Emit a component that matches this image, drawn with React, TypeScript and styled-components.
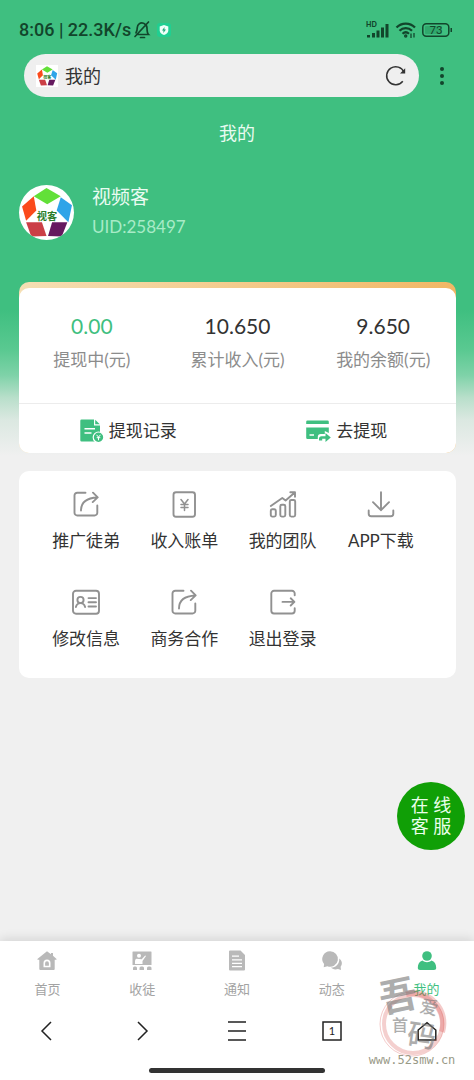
import React from "react";
import styled, { createGlobalStyle } from "styled-components";

const GREEN = "#3fbf80";
const INK = "#333333";

const GlobalStyle = createGlobalStyle`
  * { box-sizing: border-box; }
  html, body { margin: 0; padding: 0; background: #f0f0f0; }
  body { font-family: Lato, "Noto Sans CJK SC", sans-serif; color: ${INK}; }
  button, input { font: inherit; color: inherit; }
  button { border: 0; padding: 0; background: none; cursor: pointer; }
  a { color: inherit; text-decoration: none; }
  svg { display: block; flex: none; }
  h1, h2, p, dl, dt, dd, ul { margin: 0; padding: 0; font-weight: 400; }
`;

const Page = styled.div`
  min-height: 100vh;
  display: flex;
  flex-direction: column;
  background: linear-gradient(
    180deg,
    ${GREEN} 0,
    ${GREEN} 310px,
    #5ac991 350px,
    #7ed2a8 375px,
    #b9dfcb 398px,
    #dbe8e1 420px,
    #f0f0f0 456px
  );
`;

const StatusBar = styled.div`
  height: 54px;
  padding: 6px 21px 0 19px;
  display: flex;
  align-items: center;
  justify-content: space-between;
  color: #12452b;
  font-size: 18px;
  line-height: 24px;
`;

const StatusGroup = styled.div<{ $gap: number }>`
  display: flex;
  align-items: center;
  gap: ${(p) => p.$gap}px;
`;

const StatusText = styled.span`
  font-family: Roboto, sans-serif;
  font-weight: 500;
`;

const AddressRow = styled.div`
  display: flex;
  align-items: center;
  padding: 0 15px 0 24px;
  gap: 6px;
`;

const AddressBar = styled.div`
  flex: 1;
  min-width: 0;
  height: 43px;
  padding: 0 12px;
  display: flex;
  align-items: center;
  gap: 7px;
  border-radius: 22px;
  background: #efefef;
`;

const Favicon = styled.span`
  display: flex;
  background: #fff;
`;

const AddressInput = styled.input`
  flex: 1;
  min-width: 0;
  padding: 0;
  border: 0;
  outline: 0;
  background: transparent;
  font-size: 18px;
  line-height: 28px;
`;

const IconButton = styled.button<{ $w: number }>`
  width: ${(p) => p.$w}px;
  height: 34px;
  display: flex;
  align-items: center;
  justify-content: center;
`;

const Title = styled.h1`
  padding-top: 22px;
  font-size: 18px;
  line-height: 28px;
  text-align: center;
  color: #e9fbf1;
`;

const Profile = styled.section`
  display: flex;
  align-items: center;
  gap: 18px;
  padding: 35px 19px 40px;
`;

const Avatar = styled.div`
  width: 55px;
  height: 55px;
  border-radius: 50%;
  background: #fff;
  overflow: hidden;
`;

const UserName = styled.h2`
  font-size: 19px;
  line-height: 30px;
  color: #e9fbf1;
`;

const UserId = styled.p`
  font-size: 17px;
  line-height: 30px;
  color: #a8ebc7;
`;

const Content = styled.main`
  flex: 1;
  display: flex;
  flex-direction: column;
  gap: 18px;
  padding: 0 18px 24px 19px;
`;

const WalletCard = styled.section`
  padding-top: 6px;
  border-radius: 10px;
  background: linear-gradient(90deg, #f5dfb4, #f1b765);
`;

const WalletBody = styled.div`
  border-radius: 10px;
  background: #fff;
`;

const Stats = styled.dl`
  display: grid;
  grid-template-columns: repeat(3, 1fr);
  padding: 23px 0 28px;
  border-bottom: 1px solid #ececec;
`;

const Stat = styled.div`
  display: flex;
  flex-direction: column-reverse;
  align-items: center;
  gap: 4px;
`;

const StatLabel = styled.dt`
  font-size: 17px;
  line-height: 30px;
  color: #8c8c8c;
`;

const StatValue = styled.dd<{ $accent?: boolean }>`
  font-size: 21px;
  line-height: 30px;
  color: ${(p) => (p.$accent ? GREEN : INK)};
`;

const Actions = styled.div`
  display: grid;
  grid-template-columns: 1fr 1fr;
`;

const Action = styled.button`
  height: 49px;
  padding-top: 4px;
  display: flex;
  align-items: center;
  justify-content: center;
  gap: 5px;
  font-size: 17px;
  line-height: 26px;
`;

const MenuCard = styled.nav`
  display: grid;
  grid-template-columns: repeat(4, 1fr);
  padding: 19px 26px 25px 18px;
  row-gap: 33px;
  border-radius: 10px;
  background: #fff;
`;

const MenuItem = styled.a`
  display: flex;
  flex-direction: column;
  align-items: center;
  gap: 9px;
  font-size: 17px;
  line-height: 28px;
  height: 65px;
`;

const ServiceButton = styled.button`
  position: fixed;
  right: 9px;
  bottom: 230px;
  width: 68px;
  height: 68px;
  border-radius: 50%;
  background: #109f06;
  color: #eaffea;
  font-size: 18px;
  line-height: 21px;
`;

const Footer = styled.footer`
  position: sticky;
  bottom: 0;
  background: #fff;
  box-shadow: 0 -2px 10px rgba(0, 0, 0, 0.12);
`;

const TabBar = styled.nav`
  display: grid;
  grid-template-columns: repeat(5, 1fr);
  padding-top: 8px;
`;

const Tab = styled.a<{ $active?: boolean }>`
  display: flex;
  flex-direction: column;
  align-items: center;
  gap: 6px;
  font-size: 13px;
  line-height: 20px;
  color: ${(p) => (p.$active ? GREEN : "#a3a3a3")};
  svg { color: ${(p) => (p.$active ? GREEN : "#b9b9b9")}; }
`;

const BrowserBar = styled.div`
  display: grid;
  grid-template-columns: repeat(5, 1fr);
  justify-items: center;
  padding-top: 15px;
`;

const HomeIndicator = styled.div`
  width: 37%;
  height: 5px;
  margin: 20px auto 7px;
  border-radius: 3px;
  background: #333;
`;

const Watermark = styled.div`
  position: absolute;
  right: 16px;
  bottom: 4px;
  pointer-events: none;
`;

function Logo({ size }: { size: number }) {
  return (
    <svg width={size} height={size} viewBox="0 0 54 54" aria-hidden="true">
      <path d="M27 3 41 11 27.700 19 14.500 11Z" fill="#62e038" />
      <path d="M41 12 52 20 48.500 36.500 37 25Z" fill="#2fa4e8" />
      <path d="M14.500 11 17 25 7 35 3 21Z" fill="#fb4a1c" />
      <path d="M7 36.500H22.500L27 50 12 50.500Z" fill="#cb3f46" />
      <path d="M32.500 36.500H47.500L42 50.500 28.500 50Z" fill="#65195f" />
      <text x="27.500" y="34.500" textAnchor="middle" fontSize="10" fontWeight="700" fill="#2b7d2b">视客</text>
    </svg>
  );
}

function LineIcon({ children }: { children: React.ReactNode }) {
  return (
    <svg width="28" height="28" viewBox="0 0 28 28" fill="none" stroke="#919191" strokeWidth="1.900" strokeLinecap="round" strokeLinejoin="round" aria-hidden="true">
      {children}
    </svg>
  );
}

const shareIcon = (
  <LineIcon>
    <path d="M13.500 2.700H5.300a2.800 2.800 0 0 0-2.800 2.800v17.200a2.800 2.800 0 0 0 2.800 2.800h17.200a2.800 2.800 0 0 0 2.800-2.800V15.500" />
    <path d="M9 20.500C9 12.500 14 8 25.500 7.500M21 2.700l4.700 4.700-5 4.700" />
  </LineIcon>
);

const menuItems = [
  { label: "推广徒弟", icon: shareIcon },
  {
    label: "收入账单",
    icon: (
      <LineIcon>
        <rect x="3.500" y="2.300" width="21.500" height="24.500" rx="2.500" />
        <path d="m11 9.500 3.500 4.500 3.500-4.500M14.500 14v6.500M11 14.500h7M11 17.500h7" strokeWidth="1.500" />
      </LineIcon>
    ),
  },
  {
    label: "我的团队",
    icon: (
      <LineIcon>
        <rect x="1.800" y="19.300" width="5" height="7.300" rx="1.500" />
        <rect x="11.300" y="14.800" width="5" height="11.800" rx="1.500" />
        <rect x="20.800" y="10" width="5.400" height="16.600" rx="1.500" />
        <path d="M1.800 16 13.300 8l3.300 2.500L25.500 2.700M21.300 2.300h4.700v4.400" />
      </LineIcon>
    ),
  },
  {
    label: "APP下载",
    icon: (
      <LineIcon>
        <path d="M14 2.300v18M6 12.200l8 8 8-8M1.700 20.500v3.200a2.500 2.500 0 0 0 2.500 2.500h19.600a2.500 2.500 0 0 0 2.500-2.500v-3.200" />
      </LineIcon>
    ),
  },
  {
    label: "修改信息",
    icon: (
      <LineIcon>
        <rect x="1" y="2.800" width="26" height="23" rx="3" />
        <circle cx="8.500" cy="12" r="3.100" />
        <path d="M3.900 19c.6-2.300 2.300-3.900 4.600-3.900s4 1.600 4.600 3.900M16.500 10.100h7.500M16.500 14.300h7.500M16.500 18.500h7.500" />
      </LineIcon>
    ),
  },
  { label: "商务合作", icon: shareIcon },
  {
    label: "退出登录",
    icon: (
      <LineIcon>
        <path d="M25.700 7.200V5.500a2.700 2.700 0 0 0-2.700-2.700H5a2.700 2.700 0 0 0-2.700 2.700v17.300A2.700 2.700 0 0 0 5 25.500h18a2.700 2.700 0 0 0 2.700-2.700v-2.500M13.500 13.900h11.700M21.700 10.300l3.700 3.600-3.700 3.600" />
      </LineIcon>
    ),
  },
];

const stats = [
  { label: "提现中(元)", value: "0.00", accent: true },
  { label: "累计收入(元)", value: "10.650" },
  { label: "我的余额(元)", value: "9.650" },
];

const tabs = [
  {
    label: "首页",
    icon: (
      <path fillRule="evenodd" d="M12 2.200 2.700 9.700c-.5.500-.3 1 .4 1h1.200V20a1 1 0 0 0 1 1h13.400a1 1 0 0 0 1-1v-9.300h1.200c.7 0 .9-.5.4-1L18 6.800V4h-2v1.200ZM8.500 18.200V14a3.500 3.500 0 0 1 7 0v4.200Zm1.600-1.500h3.800v-2.500a1.900 1.900 0 0 0-3.800 0Z" />
    ),
  },
  {
    label: "收徒",
    icon: (
      <>
        <path fillRule="evenodd" d="M3 2.500h18a.5.500 0 0 1 .5.500v13H2.500V3a.5.500 0 0 1 .5-.5ZM9 4.700a2 2 0 1 0 0 4 2 2 0 0 0 0-4Zm-2.500 5c-1 .3-1.500 1.300-1.500 2.500V15h7.500v-3l3.500-5-.8-.6-3.500 3.800Z" />
        <path d="M3 21v-2a1.500 1.500 0 0 1 1.500-1.500h1A1.500 1.500 0 0 1 7 19v2Zm6.500 0v-2a1.500 1.500 0 0 1 1.500-1.500h1.500A1.500 1.500 0 0 1 14 19v2ZM17 21v-2a1.500 1.500 0 0 1 1.500-1.500h1.500a1.500 1.500 0 0 1 1.500 1.500v2Z" />
      </>
    ),
  },
  {
    label: "通知",
    icon: (
      <path fillRule="evenodd" d="M5 1.500h10.500L20 6v14.500a1 1 0 0 1-1 1H5a1 1 0 0 1-1-1v-18a1 1 0 0 1 1-1ZM7 6.500v1.200h7V6.500Zm0 3.800v1.200h10v-1.200Zm0 3.400v1.200h10v-1.200Zm0 3.400v1.200h10v-1.200Z" />
    ),
  },
  {
    label: "动态",
    icon: (
      <>
        <path d="M10 2.200a7.800 7.800 0 1 1-2.600 15.100L3.700 18.300l.4-3.300A7.800 7.800 0 0 1 10 2.200Z" />
        <path d="M19.300 9.500c3 2.300 3.300 5.800 1.300 8.200l.4 3.300-3-1c-3 1-5.600.2-7-1.400 5 0 8.600-3.700 8.300-9.100Z" />
      </>
    ),
  },
  {
    label: "我的",
    active: true,
    icon: (
      <>
        <circle cx="12" cy="7" r="4.800" />
        <path d="M7.500 11.500c2.600 2.300 6.400 2.300 9 0 3 1 4.700 3.500 4.700 7.300 0 1.400-.8 2.200-2.200 2.200H5c-1.400 0-2.200-.8-2.200-2.200 0-3.800 1.700-6.300 4.700-7.300Z" />
      </>
    ),
  },
];

const browserControls = [
  { label: "后退", icon: <path d="M17 4 8 13l9 9" /> },
  { label: "前进", icon: <path d="m9 4 9 9-9 9" /> },
  { label: "菜单", icon: <path d="M4 4h18M4 13h18M4 22h18" /> },
  {
    label: "标签页",
    icon: (
      <>
        <rect x="4" y="4" width="18" height="18" />
        <text x="13" y="17" textAnchor="middle" fontSize="11" fill="#222" stroke="none">1</text>
      </>
    ),
  },
  { label: "主页", icon: <path d="M4.200 22V12L13 4.700 21.800 12v10Z" /> },
];

export default function App() {
  return (
    <Page>
      <GlobalStyle />
      <StatusBar>
        <StatusGroup $gap={2}>
          <StatusText>8:06 | 22.3K/s</StatusText>
          <svg width="18" height="20" viewBox="0 0 18 20" fill="none" stroke="currentColor" strokeWidth="1.700" strokeLinecap="round">
            <path d="M5 14.500h10.500c-1.500-1.500-1.500-3-1.500-6.500 0-2-1-3.500-2.700-4.300M10.500 3.200C7 2.200 4.500 4.500 4.300 7.500 4.200 10 4 11.500 3 12.800M7.500 17.500h4M15.500 2 2 16.500" />
          </svg>
          <svg width="18" height="20" viewBox="0 0 18 20">
            <rect x="4" y="3" width="14" height="14" rx="3" fill="#20cf91" />
            <path d="m11 5 4.300 1.500v4c0 2-1.800 3.500-4.300 4.500-2.500-1-4.300-2.500-4.300-4.500v-4Z" fill="#effff8" />
            <path d="m11.500 7-2.500 3.500h1.500L10.300 13l2.700-3.500h-1.600Z" fill="#20a879" />
          </svg>
        </StatusGroup>
        <StatusGroup $gap={5}>
          <svg width="24" height="18" viewBox="0 0 24 18" fill="currentColor">
            <text x="0" y="6" fontSize="7" fontWeight="900">HD</text>
            <path d="M1 14h3v2.500H1ZM6 12h3v4.500H6ZM10.500 9.500h3v7h-3ZM15 6.500h3v10h-3ZM19.500 3h3v13.500h-3Z" />
          </svg>
          <svg width="22" height="18" viewBox="0 0 22 18" fill="none" stroke="currentColor" strokeWidth="2.200">
            <path d="M1.500 6.500c5-5.300 13.500-5.300 18.500 0M4.500 9.800c3.500-3.600 9-3.600 12.500 0M7.500 12.700c2-1.800 4.500-1.800 6.500 0" />
            <circle cx="10.700" cy="15" r="1" strokeWidth="1.500" />
            <path d="M16 12.500V17M19 12v4.500" strokeWidth="1.300" />
          </svg>
          <svg width="31" height="16" viewBox="0 0 31 16">
            <rect x="0.800" y="1.800" width="26" height="12.500" rx="3.500" fill="none" stroke="currentColor" strokeWidth="1.500" />
            <rect x="3" y="4" width="17" height="8" rx="1" fill="#30a86c" />
            <path d="M28.500 6h1.500v4h-1.500Z" fill="currentColor" />
            <text x="14" y="12" textAnchor="middle" fontSize="11" fill="currentColor">73</text>
          </svg>
        </StatusGroup>
      </StatusBar>

      <AddressRow>
        <AddressBar>
          <Favicon><Logo size={22} /></Favicon>
          <AddressInput aria-label="地址" defaultValue="我的" />
          <IconButton $w={22} aria-label="刷新">
            <svg width="22" height="22" viewBox="0 0 22 22" fill="none" stroke="#333" strokeWidth="1.500">
              <path d="M17.800 16.200A9 9 0 1 1 19 7.300" />
              <path d="M20.200 3.300v5.200h-5.200Z" fill="#333" stroke="none" />
            </svg>
          </IconButton>
        </AddressBar>
        <IconButton $w={34} aria-label="更多">
          <svg width="6" height="20" viewBox="0 0 6 20" fill="#12452b">
            <circle cx="3" cy="3" r="2" />
            <circle cx="3" cy="10" r="2" />
            <circle cx="3" cy="17" r="2" />
          </svg>
        </IconButton>
      </AddressRow>

      <Title>我的</Title>

      <Profile>
        <Avatar><Logo size={55} /></Avatar>
        <div>
          <UserName>视频客</UserName>
          <UserId>UID:258497</UserId>
        </div>
      </Profile>

      <Content>
        <WalletCard>
          <WalletBody>
            <Stats>
              {stats.map((s) => (
                <Stat key={s.label}>
                  <StatLabel>{s.label}</StatLabel>
                  <StatValue $accent={s.accent}>{s.value}</StatValue>
                </Stat>
              ))}
            </Stats>
            <Actions>
              <Action>
                <svg width="24" height="24" viewBox="0 0 24 24" fill={GREEN}>
                  <path d="M1.500.500H14v6h6v16H1.500A1.200 1.200 0 0 1 .300 21.300V1.700A1.200 1.200 0 0 1 1.500.500Z" />
                  <path d="M15.200.800 19.800 5.300h-4.600Z" />
                  <path d="M4.500 9.700h10.500M4.500 14h7" stroke="#fff" strokeWidth="1.500" />
                  <circle cx="18.500" cy="18.300" r="5.300" stroke="#fff" strokeWidth="1.200" />
                  <path d="m16.500 15.800 2 2.300 2-2.300M18.500 18v3.300M16.700 18.700h3.600" fill="none" stroke="#fff" strokeWidth="1" />
                </svg>
                提现记录
              </Action>
              <Action>
                <svg width="25" height="24" viewBox="0 0 25 24" fill={GREEN}>
                  <path d="M1.500 1.500h20A1.300 1.300 0 0 1 22.800 2.800V5H.200V2.800A1.300 1.300 0 0 1 1.500 1.500ZM.200 8.500h22.600V14l-4-2v3h-4a3 3 0 0 0-3 3v2H1.500A1.300 1.300 0 0 1 .200 18.700Z" />
                  <path d="M3.500 16h4.500" stroke="#fff" strokeWidth="1.500" />
                  <path d="M13 21.500v-1.700a2.500 2.500 0 0 1 2.500-2.500h4v-3.300l5.300 4.500-5.300 4.500v-3.200h-3.300v1.700Z" />
                </svg>
                去提现
              </Action>
            </Actions>
          </WalletBody>
        </WalletCard>

        <MenuCard aria-label="功能">
          {menuItems.map((m) => (
            <MenuItem key={m.label} href="#">
              {m.icon}
              {m.label}
            </MenuItem>
          ))}
        </MenuCard>
      </Content>

      <ServiceButton>
        在 线<br />客 服
      </ServiceButton>

      <Footer>
        <TabBar aria-label="主导航">
          {tabs.map((t) => (
            <Tab key={t.label} href="#" $active={t.active}>
              <svg width="24" height="24" viewBox="0 0 24 24" fill="currentColor" aria-hidden="true">{t.icon}</svg>
              {t.label}
            </Tab>
          ))}
        </TabBar>
        <BrowserBar>
          {browserControls.map((b) => (
            <IconButton key={b.label} $w={44} aria-label={b.label}>
              <svg width="26" height="26" viewBox="0 0 26 26" fill="none" stroke="#222" strokeWidth="1.500">{b.icon}</svg>
            </IconButton>
          ))}
        </BrowserBar>
        <HomeIndicator />
        <Watermark>
          <svg width="90" height="110" viewBox="0 0 90 110">
            <g fill="none" stroke="#d9534f">
              <circle cx="45" cy="58" r="29" strokeWidth="4" opacity="0.280" />
              <circle cx="44" cy="58" r="32" strokeWidth="1" opacity="0.300" />
              <path d="M38 28a30 30 0 0 1 36 38" strokeWidth="6" opacity="0.300" />
            </g>
            <g fill="#777" opacity="0.600" fontWeight="500">
              <text x="11" y="44" fontSize="38" fontWeight="700" transform="rotate(-12 28 30)">吾</text>
              <text x="52" y="48" fontSize="18" transform="rotate(12 62 42)">爱</text>
              <text x="24" y="65" fontSize="16">首</text>
              <text x="40" y="80" fontSize="29" transform="rotate(8 54 65)">码</text>
            </g>
            <text x="44" y="98" textAnchor="middle" fontSize="12" fill="#999a87" fontFamily="DejaVu Sans Mono, monospace">www.52smw.cn</text>
          </svg>
        </Watermark>
      </Footer>
    </Page>
  );
}
